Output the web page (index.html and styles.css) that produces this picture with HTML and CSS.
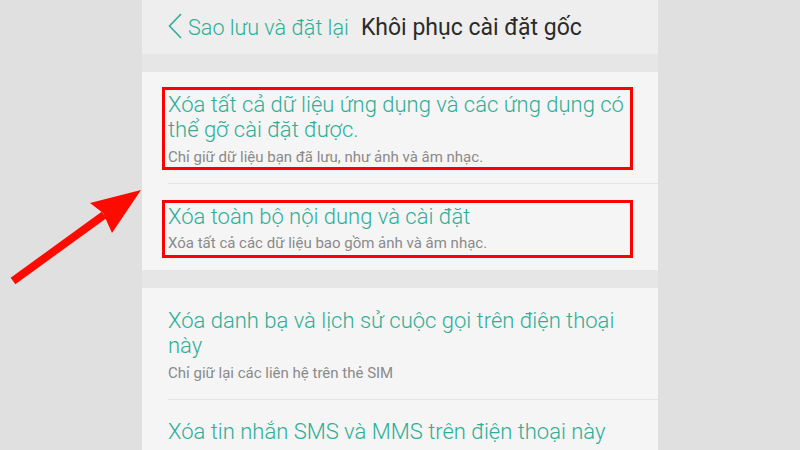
FILE: index.html
```html
<!DOCTYPE html>
<html lang="vi">
<head>
<meta charset="utf-8">
<title>Khôi phục cài đặt gốc</title>
<link rel="stylesheet" href="styles.css">
</head>
<body>
<div class="stage">
  <div class="phone">
    <header class="topbar">
      <svg class="chev" width="14" height="26" viewBox="0 0 14 26"><path d="M13 1 L1.5 13 L13 25" fill="none" stroke="#2fae97" stroke-width="1.6"/></svg>
      <span class="back">Sao lưu và đặt lại</span>
      <span class="title">Khôi phục cài đặt gốc</span>
    </header>
    <div class="band"></div>
    <section class="group">
      <div class="item item-a">
        <div class="mark mark-a">
          <div class="item-title">Xóa tất cả dữ liệu ứng dụng và các ứng dụng có<br>thể gỡ cài đặt được.</div>
          <div class="item-sub">Chỉ giữ dữ liệu bạn đã lưu, như ảnh và âm nhạc.</div>
        </div>
      </div>
      <div class="divider"></div>
      <div class="item item-b">
        <div class="mark mark-b">
          <div class="item-title">Xóa toàn bộ nội dung và cài đặt</div>
          <div class="item-sub">Xóa tất cả các dữ liệu bao gồm ảnh và âm nhạc.</div>
        </div>
      </div>
    </section>
    <div class="band"></div>
    <section class="group">
      <div class="item item-c">
        <div class="item-title">Xóa danh bạ và lịch sử cuộc gọi trên điện thoại<br>này</div>
        <div class="item-sub">Chỉ giữ lại các liên hệ trên thẻ SIM</div>
      </div>
      <div class="divider"></div>
      <div class="item item-d">
        <div class="item-title">Xóa tin nhắn SMS và MMS trên điện thoại này</div>
      </div>
    </section>
  </div>
  <svg class="arrow" width="160" height="300" viewBox="0 0 160 300">
    <line x1="13" y1="281" x2="104" y2="215" stroke="#ff0a00" stroke-width="8"/>
    <polygon points="141,190 90,203 103,213 112,233" fill="#ff0a00"/>
  </svg>
</div>
</body>
</html>
```
FILE: styles.css
```css
html, body {
  margin: 0;
  padding: 0;
}
body {
  background: #e0e0e0;
  font-family: Roboto, "Noto Sans", "DejaVu Sans", sans-serif;
  width: 800px;
  height: 450px;
  overflow: hidden;
}
.stage {
  position: relative;
  width: 800px;
  height: 450px;
  display: flex;
  justify-content: flex-start;
}
.phone {
  margin-left: 142px;
  width: 516px;
  height: 450px;
  background: #f5f5f5;
  display: flex;
  flex-direction: column;
  overflow: hidden;
}
.topbar {
  height: 54px;
  background: #eeeeee;
  display: flex;
  align-items: center;
  padding-left: 26px;
  box-sizing: border-box;
  flex-shrink: 0;
}
.chev {
  margin-right: 6px;
  margin-top: -2px;
}
.back {
  color: #2fae97;
  font-size: 21.6px;
  font-weight: 300;
  margin-right: 12px;
}
.title {
  color: #2b2b2b;
  font-size: 23px;
  font-weight: 400;
}
.band {
  height: 18px;
  background: #e6e6e6;
  flex-shrink: 0;
}
.group {
  background: #f5f5f5;
  flex-shrink: 0;
}
.item-title {
  color: #2fae97;
  font-size: 22px;
  font-weight: 300;
  line-height: 25px;
  white-space: nowrap;
}
.item-sub {
  color: #8a8a8a;
  font-size: 15px;
  font-weight: 400;
  line-height: 20px;
  white-space: nowrap;
}
.mark {
  border: 3px solid #ff0000;
  margin: 0 25px 0 20px;
  padding: 2px 3px 0;
}
.item-a {
  padding: 15px 0 13px;
}
.item-a .item-sub {
  margin-top: 5px;
}
.item-b {
  padding: 16px 0 12px;
}
.mark-b {
  padding: 1px 3px 2px;
}
.item-b .item-sub {
  margin-top: 4px;
}
.divider {
  height: 1px;
  background: #e4e4e4;
  margin-left: 26px;
}
.item-c {
  padding: 20px 0 16px 26px;
}
.item-c .item-sub {
  margin-top: 5px;
}
.item-d {
  padding: 19px 0 0 26px;
}
.arrow {
  position: absolute;
  left: 0;
  top: 0;
}
```
